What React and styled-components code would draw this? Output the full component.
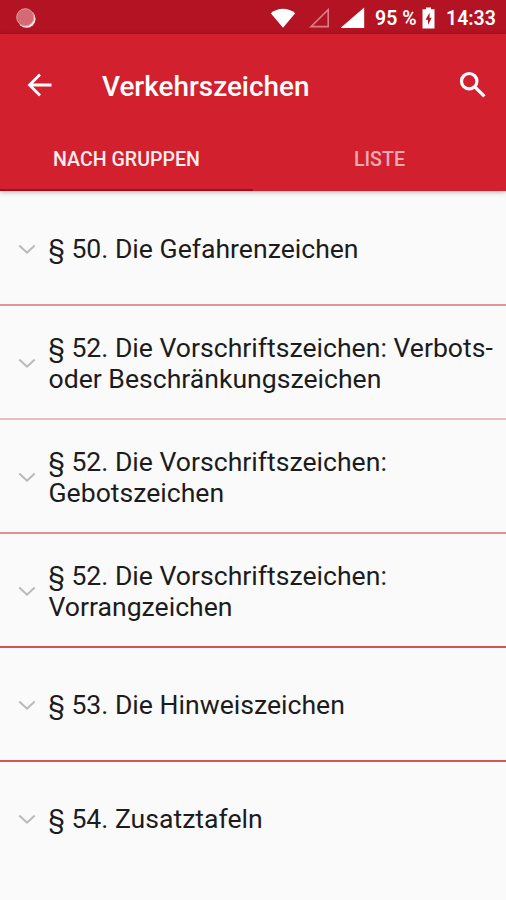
import React from 'react'
import styled, { createGlobalStyle } from 'styled-components';

const groups = [
  { lines: ['§ 50. Die Gefahrenzeichen'], line: '#e5939b' },
  { lines: ['§ 52. Die Vorschriftszeichen: Verbots-', 'oder Beschränkungszeichen'], line: '#e9bcc5' },
  { lines: ['§ 52. Die Vorschriftszeichen:', 'Gebotszeichen'], line: '#df8f99' },
  { lines: ['§ 52. Die Vorschriftszeichen:', 'Vorrangzeichen'], line: '#cf555b' },
  { lines: ['§ 53. Die Hinweiszeichen'], line: '#d0585b' },
  { lines: ['§ 54. Zusatztafeln'], line: 'transparent' },
];

export default function App() {
  return (
    <Screen>
      <GlobalStyle />
      <StatusBar>
        <RecordDot viewBox="0 0 20 20">
          <circle cx="10.6" cy="10.8" r="9" fill="#f8e6e6" />
          <circle cx="9.2" cy="9.2" r="8.7" fill="#d46a74" />
          <circle cx="9.3" cy="9.3" r="8.6" fill="none" stroke="#dc959b" strokeWidth="1" />
        </RecordDot>
        <StatusIcon $w={26} $gap={13} viewBox="0 0 26 22">
          <path d="M0.8 6.2C7.5 0.1 18.5 0.1 25.2 6.2L13 20.8Z" fill="#fff" />
        </StatusIcon>
        <StatusIcon $w={22} $gap={10} viewBox="0 0 22 22">
          <path d="M19.2 2.6V19.6H2Z" fill="none" stroke="#dc7d86" strokeWidth="1.6" />
        </StatusIcon>
        <StatusIcon $w={24} $gap={10} viewBox="0 0 24 22">
          <path d="M23.2 0.6V21H0V20.4Z" fill="#fff" />
        </StatusIcon>
        <StatusText $w={42}>95 %</StatusText>
        <StatusIcon $w={13} $gap={11} $left={5} viewBox="0 0 13 22">
          <path d="M4 0.5H9V2.3H12.5V21.5H0.5V2.3H4Z" fill="#fff" />
          <path d="M7.6 5.8L3.5 12.7H6V18L9.7 10.8H7.6Z" fill="#b51423" />
        </StatusIcon>
        <StatusText $w={49}>14:33</StatusText>
      </StatusBar>
      <AppBar>
        <Toolbar>
          <BackIcon viewBox="0 0 26 26">
            <path d="M24.5 13H3M13 2.5L2.5 13L13 23.5" />
          </BackIcon>
          <Title>Verkehrszeichen</Title>
          <SearchIcon viewBox="0 0 28 28">
            <circle cx="10.2" cy="10.2" r="7.7" />
            <path d="M15.8 15.8L25.4 25.4" />
          </SearchIcon>
        </Toolbar>
        <Tabs>
          <Tab $active>NACH GRUPPEN</Tab>
          <Tab>LISTE</Tab>
        </Tabs>
      </AppBar>
      <List>
        {groups.map((group, i) => (
          <Row key={i} $line={group.line}>
            <Chevron viewBox="0 0 18 11">
              <path d="M1.3 1.5L9 8.7L16.7 1.5" />
            </Chevron>
            <Label>
              {group.lines.map((text) => (
                <span key={text}>{text}</span>
              ))}
            </Label>
          </Row>
        ))}
      </List>
    </Screen>
  )
}

const GlobalStyle = createGlobalStyle`
  body {
    margin: 0;
    background: #fafafa;
    font-family: Roboto, "Liberation Sans", sans-serif;
  }
  * {
    box-sizing: border-box;
  }
`;

const Screen = styled.div`
  width: 506px;
  height: 900px;
  overflow: hidden;
  background: #fafafa;
`;

const StatusBar = styled.div`
  display: flex;
  align-items: center;
  height: 34px;
  padding: 1px 11px 0 16px;
  background: #b31322;
`;

const RecordDot = styled.svg`
  width: 20px;
  height: 20px;
  margin-right: auto;
`;

const StatusIcon = styled.svg`
  flex: none;
  width: ${(p) => p.$w}px;
  height: 22px;
  margin-left: ${(p) => p.$left || 0}px;
  margin-right: ${(p) => p.$gap}px;
`;

const StatusText = styled.span`
  flex: none;
  width: ${(p) => p.$w}px;
  padding-top: 2px;
  color: #fff;
  font-size: 19.5px;
  font-weight: 600;
  line-height: 34px;
  white-space: nowrap;
`;

const AppBar = styled.header`
  position: relative;
  height: 157px;
  background: #d2202f;
  box-shadow: 0 1px 5px rgba(0, 0, 0, 0.3);
`;

const Toolbar = styled.div`
  display: flex;
  align-items: center;
  height: 101px;
  padding: 0 20px 0 27px;
`;

const BackIcon = styled.svg`
  width: 26px;
  height: 26px;
  fill: none;
  stroke: #fff;
  stroke-width: 2.8;
`;

const Title = styled.h1`
  flex: 1;
  margin: 4px 0 0 49px;
  color: #fff;
  font-size: 27.9px;
  font-weight: 500;
  line-height: 36px;
`;

const SearchIcon = styled.svg`
  width: 28px;
  height: 28px;
  margin-right: -1px;
  fill: none;
  stroke: #fff;
  stroke-width: 3.2;
`;

const Tabs = styled.div`
  display: flex;
  height: 56px;
`;

const Tab = styled.div`
  flex: 1;
  height: 56px;
  padding-top: 13px;
  border-bottom: 2px solid ${(p) => (p.$active ? '#a20f1c' : 'transparent')};
  color: ${(p) => (p.$active ? '#fdeeee' : '#f0aab0')};
  font-size: 19.6px;
  font-weight: 500;
  line-height: 24px;
  text-align: center;
`;

const List = styled.div`
  display: flex;
  flex-direction: column;
  padding-top: 1px;
`;

const Row = styled.div`
  display: flex;
  align-items: center;
  height: 114px;
  padding: 2px 0 0 18px;
  border-bottom: 2px solid ${(p) => p.$line};
`;

const Chevron = styled.svg`
  flex: none;
  width: 18px;
  height: 11px;
  margin-right: 12.5px;
  fill: none;
  stroke: #b9b9b9;
  stroke-width: 2;
`;

const Label = styled.div`
  display: flex;
  flex-direction: column;
  color: #1c1c1c;
  font-size: 26.6px;
  line-height: 31.5px;
  white-space: nowrap;
`;
